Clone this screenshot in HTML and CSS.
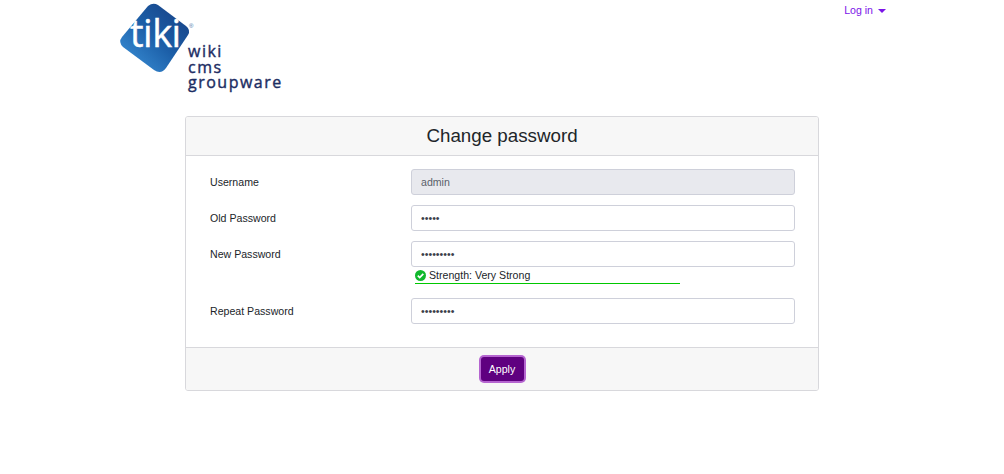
FILE: index.html
```html
<!DOCTYPE html>
<html lang="en">
<head>
<meta charset="utf-8">
<title>Change password</title>
<link rel="stylesheet" href="styles.css">
</head>
<body>
<header class="top">
  <svg class="logo" width="170" height="100" viewBox="0 0 170 100" aria-label="Tiki wiki cms groupware">
    <defs>
      <linearGradient id="lg" x1="0" y1="1" x2="1" y2="0">
        <stop offset="0" stop-color="#3f97de"/>
        <stop offset="0.5" stop-color="#1c5fa8"/>
        <stop offset="1" stop-color="#173d80"/>
      </linearGradient>
    </defs>
    <path d="M30 4 Q35 0 40 3 L68 24 Q73 28 70 33 L48 66 Q43 73 36 68 L5 45 Q0 40 4 35 Z" fill="url(#lg)"/>
    <text class="logo-tiki" x="12" y="45">tiki</text>
    <text class="logo-r" x="71" y="26">®</text>
    <text class="logo-word" x="70" y="55">wiki</text>
    <text class="logo-word" x="70" y="71">cms</text>
    <text class="logo-word" x="70" y="86">groupware</text>
  </svg>
  <a class="login" href="#">Log in<span class="caret"></span></a>
</header>
<main class="card">
  <h1 class="card-title">Change password</h1>
  <form class="card-body">
    <div class="row">
      <label class="lbl">Username</label>
      <input class="field field-ro" type="text" value="admin" readonly>
    </div>
    <div class="row">
      <label class="lbl">Old Password</label>
      <input class="field" type="password" value="12345">
    </div>
    <div class="row row-strength">
      <label class="lbl">New Password</label>
      <div class="col">
        <input class="field" type="password" value="123456789">
        <div class="strength">
          <svg width="11" height="11" viewBox="0 0 11 11"><circle cx="5.5" cy="5.5" r="5.5" fill="#10b82c"/><path d="M2.8 5.7 4.7 7.6 8.3 3.8" fill="none" stroke="#fff" stroke-width="1.7"/></svg>
          <span>Strength: Very Strong</span>
        </div>
      </div>
    </div>
    <div class="row">
      <label class="lbl">Repeat Password</label>
      <input class="field" type="password" value="123456789">
    </div>
  </form>
  <div class="card-foot"><button class="apply" type="button">Apply</button></div>
</main>
</body>
</html>
```
FILE: styles.css
```css
* { box-sizing: border-box; }
html, body { margin: 0; padding: 0; background: #fff; }
body { font-family: "Liberation Sans", Arial, sans-serif; font-size: 10.6px; color: #212529; }
.top { display: flex; justify-content: space-between; align-items: flex-start; height: 116px; padding: 0 118px 0 118px; }
.logo { display: block; margin-top: 2px; }
.logo-tiki { font: 400 38px "Open Sans", sans-serif; fill: #fff; letter-spacing: -0.5px; stroke: #fff; stroke-width: 0.4px; }
.logo-r { font: 6px "Liberation Sans", sans-serif; fill: #3a6ea8; }
.logo-word { font: 400 16px "Open Sans", sans-serif; fill: #1c2d63; letter-spacing: 1.5px; stroke: #1c2d63; stroke-width: 0.4px; }
.login { color: #7b14e8; text-decoration: none; font-size: 10.6px; line-height: 13px; margin-top: 4px; display: flex; align-items: center; }
.caret { width: 0; height: 0; margin-left: 5px; border-left: 4px solid transparent; border-right: 4px solid transparent; border-top: 4px solid #7b14e8; }
.card { width: 634px; margin-left: 185px; border: 1px solid #d8d8dc; border-radius: 3px; overflow: hidden; }
.card-title { margin: 0; height: 39px; background: #f7f7f7; border-bottom: 1px solid #d8d8dc; font-size: 18.75px; font-weight: 400; line-height: 38px; text-align: center; }
.card-body { padding: 13px 23px 23px 24px; display: flex; flex-direction: column; gap: 10px; }
.row { display: flex; align-items: flex-start; }
.row-strength { margin-bottom: 4px; }
.lbl { width: 201px; flex: none; line-height: 26px; font-size: 10.6px; color: #212529; }
.col { flex: 1; min-width: 0; }
.field { display: block; width: 100%; flex: 1; min-width: 0; height: 26px; padding: 0 9px; border: 1px solid #ced0da; border-radius: 3px; background: #fff; font: 10.6px "Liberation Sans", sans-serif; color: #3c3f4a; outline: none; }
.field-ro { background: #e8e9ee; color: #5a5f6a; }
.strength { width: 265px; margin-left: 4px; margin-top: 1px; height: 16px; padding-bottom: 1px; border-bottom: 1px solid #00c800; display: flex; align-items: center; gap: 3px; font-size: 10.6px; line-height: 13px; color: #212529; }
.card-foot { height: 43px; background: #f7f7f7; border-top: 1px solid #d8d8dc; display: flex; align-items: center; justify-content: center; }
.apply { width: 43px; height: 24px; padding: 0; background: #5f0080; color: #fff; border: 0; border-radius: 3px; font: 10.6px "Liberation Sans", sans-serif; box-shadow: 0 0 0 2px #b565d0; }
```
